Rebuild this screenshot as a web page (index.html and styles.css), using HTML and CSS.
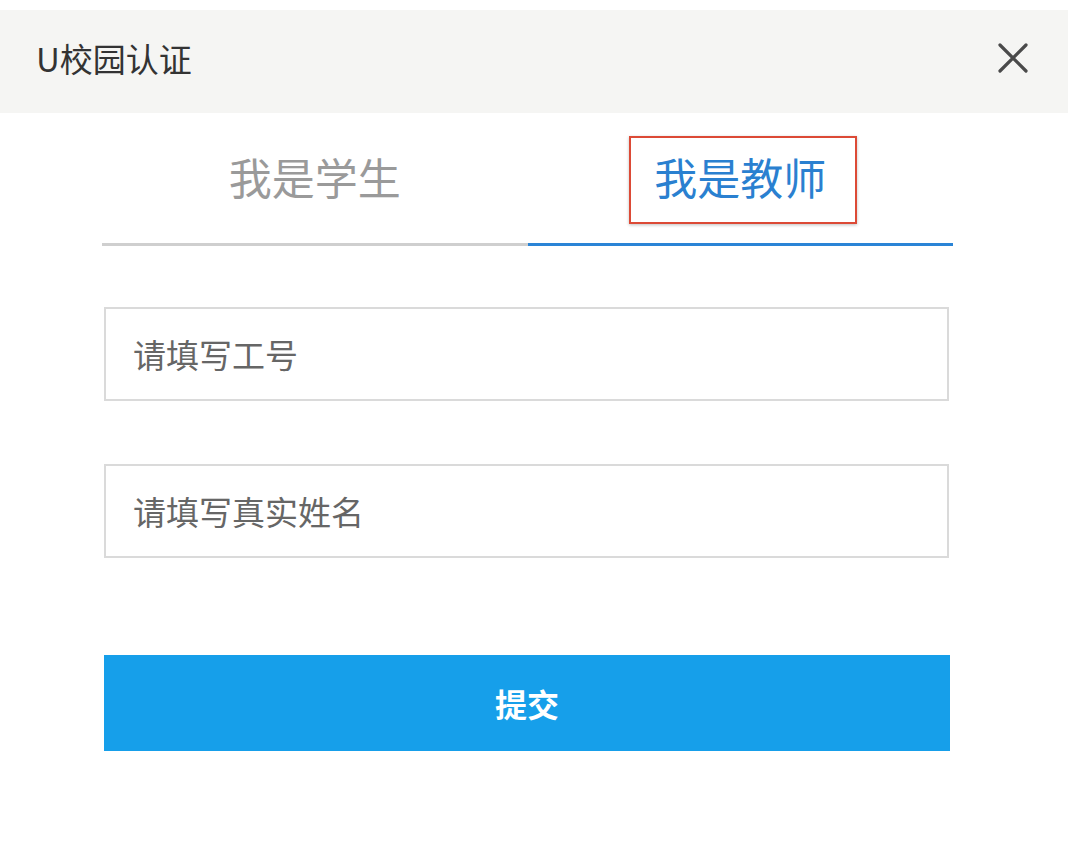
FILE: index.html
```html
<!DOCTYPE html>
<html lang="zh-CN">
<head>
<meta charset="utf-8">
<title>U校园认证</title>
<link rel="stylesheet" href="styles.css">
</head>
<body>
<div class="dialog">
  <header class="header">
    <h1 class="title">U校园认证</h1>
    <button class="close" aria-label="关闭">
      <svg width="30" height="30" viewBox="0 0 30 30"><path d="M2 2 L28 28 M28 2 L2 28" stroke="#4a4a4a" stroke-width="3.2" stroke-linecap="round" fill="none"/></svg>
    </button>
  </header>
  <main class="body">
    <nav class="tabs">
      <div class="tab">我是学生</div>
      <div class="tab active">我是教师<span class="mark"></span></div>
    </nav>
    <form class="form">
      <div class="field">请填写工号</div>
      <div class="field">请填写真实姓名</div>
      <div class="submit">提交</div>
    </form>
  </main>
</div>
</body>
</html>
```
FILE: styles.css
```css
html, body {
  margin: 0;
  padding: 0;
  background: #ffffff;
}
body {
  font-family: "Noto Sans CJK SC", "Noto Sans", "Liberation Sans", sans-serif;
  width: 1068px;
  height: 849px;
  overflow: hidden;
}
.dialog {
  padding-top: 10px;
}
.header {
  height: 103px;
  box-sizing: border-box;
  background: #f5f5f3;
  display: flex;
  align-items: center;
  justify-content: space-between;
  padding: 0 40px 7px 36px;
}
.title {
  margin: 0;
  font-size: 33px;
  font-weight: 400;
  color: #333333;
}
.close {
  border: 0;
  background: transparent;
  padding: 0;
  width: 30px;
  height: 30px;
}
.close svg { display: block; }
.body {
  padding: 0 119px 0 104px;
}
.tabs {
  display: flex;
  margin: 0 -4px 0 -2px;
  height: 133px;
}
.tab {
  flex: 1;
  position: relative;
  display: flex;
  align-items: center;
  justify-content: center;
  padding-bottom: 4px;
  box-sizing: border-box;
  font-size: 43px;
  color: #9a9a9a;
  border-bottom: 3px solid #cfcfcf;
}
.tab.active {
  color: #2a80d0;
  border-bottom: 3px solid #2a84d6;
}
.mark {
  position: absolute;
  left: 101px;
  top: 23px;
  width: 228px;
  height: 88px;
  box-sizing: border-box;
  border: 2px solid #dc4a36;
  box-shadow: 0 1px 3px rgba(0,0,0,0.25);
}
.form {
  display: flex;
  flex-direction: column;
  padding-top: 61px;
}
.field {
  height: 94px;
  box-sizing: border-box;
  border: 2px solid #dadada;
  display: flex;
  align-items: center;
  padding-left: 27px;
  font-size: 33px;
  color: #666666;
  margin-bottom: 63px;
}
.field + .field {
  margin-bottom: 97px;
}
.submit {
  height: 96px;
  background: #169fea;
  color: #ffffff;
  font-size: 32px;
  font-weight: 700;
  display: flex;
  align-items: center;
  justify-content: center;
  margin-right: -1px;
}
```
